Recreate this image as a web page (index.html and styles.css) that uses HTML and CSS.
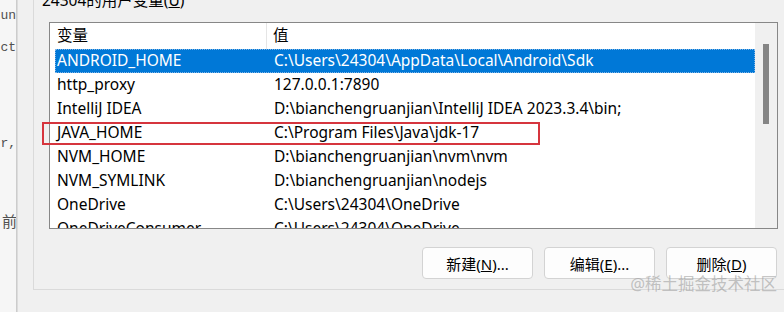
FILE: index.html
```html
<!DOCTYPE html>
<html>
<head>
    <title>环境变量</title>
    <link rel="stylesheet" href="styles.css">
</head>
<body>
    <div class="screen">
        <div class="editor">
            <div class="code-line">fun</div>
            <div class="code-line"></div>
            <div class="code-line">ect</div>
            <div class="code-line"></div>
            <div class="code-line"></div>
            <div class="code-line"></div>
            <div class="code-line"></div>
            <div class="code-line"></div>
            <div class="code-line">er,</div>
            <div class="code-line"></div>
            <div class="code-line"></div>
            <div class="code-line"></div>
            <div class="code-line"></div>
            <div class="code-line cjk">前</div>
        </div>
        <div class="edge"></div>

        <div class="dialog">
            <div class="group">
                <div class="group-label">24304的用户变量(<u>U</u>)</div>

                <div class="listbox">
                    <div class="list">
                        <div class="list-head">
                            <div class="head-name">变量</div>
                            <div class="head-value">值</div>
                        </div>
                        <div class="row selected">
                            <div class="cell-name">ANDROID_HOME</div>
                            <div class="cell-value">C:\Users\24304\AppData\Local\Android\Sdk</div>
                        </div>
                        <div class="row">
                            <div class="cell-name">http_proxy</div>
                            <div class="cell-value">127.0.0.1:7890</div>
                        </div>
                        <div class="row">
                            <div class="cell-name">IntelliJ IDEA</div>
                            <div class="cell-value">D:\bianchengruanjian\IntelliJ IDEA 2023.3.4\bin;</div>
                        </div>
                        <div class="row">
                            <div class="cell-name">JAVA_HOME</div>
                            <div class="cell-value">C:\Program Files\Java\jdk-17</div>
                        </div>
                        <div class="row">
                            <div class="cell-name">NVM_HOME</div>
                            <div class="cell-value">D:\bianchengruanjian\nvm\nvm</div>
                        </div>
                        <div class="row">
                            <div class="cell-name">NVM_SYMLINK</div>
                            <div class="cell-value">D:\bianchengruanjian\nodejs</div>
                        </div>
                        <div class="row">
                            <div class="cell-name">OneDrive</div>
                            <div class="cell-value">C:\Users\24304\OneDrive</div>
                        </div>
                        <div class="row">
                            <div class="cell-name">OneDriveConsumer</div>
                            <div class="cell-value">C:\Users\24304\OneDrive</div>
                        </div>
                    </div>
                    <div class="scrollbar">
                        <div class="thumb"></div>
                    </div>
                    <!-- annotation drawn over the JAVA_HOME row -->
                    <div class="mark"></div>
                </div>

                <div class="buttons">
                    <button class="btn">新建(<u>N</u>)...</button>
                    <button class="btn">编辑(<u>E</u>)...</button>
                    <button class="btn">删除(<u>D</u>)</button>
                </div>

                <div class="watermark">@稀土掘金技术社区</div>
            </div>
        </div>
    </div>
</body>
</html>
```

FILE: styles.css
```css
body {
    margin: 0;
    font-family: "Noto Sans", "Noto Sans CJK SC", sans-serif;
    font-size: 15.5px;
    color: #000;
    background: #f0f0f0;
}
.screen {
    display: flex;
    width: 784px;
    height: 312px;
    overflow: hidden;
}

/* editor peeking out on the left */
.editor {
    width: 16px;
    flex-shrink: 0;
    padding-top: 8px;
    background: #f6f6f6;
    overflow: hidden;
    font-family: "Liberation Mono", "Noto Sans CJK SC", monospace;
    font-size: 13px;
    color: #505050;
}
.code-line {
    display: flex;
    justify-content: flex-end;
    height: 16px;
    line-height: 16px;
    white-space: nowrap;
}
.code-line.cjk {
    font-size: 15px;
    margin-right: -1px;
}
.edge {
    width: 2px;
    flex-shrink: 0;
    background: linear-gradient(to right, #c4c4c4, #e4e4e4);
}

.dialog {
    flex: 1;
    padding-left: 15px;
    background: #f0f0f0;
}
.group {
    position: relative;
    height: 299px;
    padding: 0 6px 0 15px;
    border-left: 1px solid #dadada;
    border-bottom: 1px solid #dadada;
}
.group-label {
    margin: -10px 0 0 -7px;
    height: 20px;
    line-height: 20px;
    white-space: nowrap;
}

.listbox {
    position: relative;
    display: flex;
    height: 205px;
    margin-top: 12px;
    border: 1px solid #878787;
    background: #fff;
}
.list {
    flex: 1;
    overflow: hidden;
}
.list-head {
    display: flex;
    height: 26px;
    line-height: 24px;
}
.head-name {
    width: 209px;
    padding-left: 7px;
    border-right: 1px solid #e5e5e5;
}
.head-value {
    padding-left: 6px;
}
.row {
    display: flex;
    height: 24px;
    line-height: 23px;
    margin-left: 5px;
    white-space: nowrap;
}
.row.selected {
    background: #0078d7;
    color: #fff;
    outline: 1px dotted #7fb4e6;
    outline-offset: -1px;
}
.cell-name {
    width: 217px;
    flex-shrink: 0;
    padding-left: 2px;
}
.scrollbar {
    width: 14px;
    padding: 21px 0 0 8px;
    background: #f0f0f0;
}
.thumb {
    width: 6px;
    height: 80px;
    background: #858585;
}
.mark {
    position: absolute;
    left: -8px;
    top: 99px;
    width: 498px;
    height: 23px;
    box-sizing: border-box;
    border: 2px solid #d6353e;
}

.buttons {
    display: flex;
    justify-content: flex-end;
    gap: 11px;
    margin-top: 18px;
    margin-right: 1px;
}
.btn {
    width: 111px;
    height: 32px;
    font-family: "Noto Sans", "Noto Sans CJK SC", sans-serif;
    font-size: 15px;
    color: #000;
    background: #fdfdfd;
    border: 1px solid #d3d3d3;
    border-radius: 4px;
    padding: 0;
}

.watermark {
    position: absolute;
    right: 7px;
    bottom: -6px;
    font-size: 16.5px;
    color: rgba(150, 150, 150, 0.55);
    white-space: nowrap;
}
```
